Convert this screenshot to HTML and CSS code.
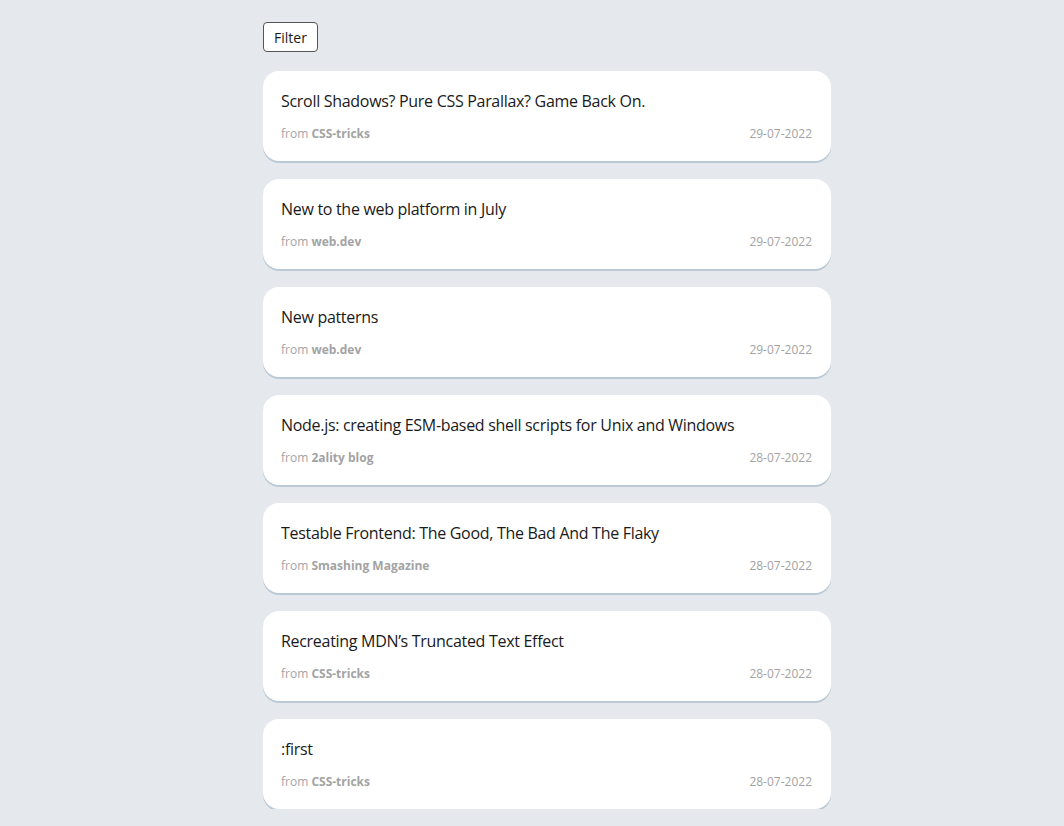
FILE: index.html
```html
<!DOCTYPE html>
<html lang="en">
<head>
<meta charset="utf-8">
<title>Feed</title>
<link rel="stylesheet" href="styles.css">
</head>
<body>
<main class="feed">
  <div class="toolbar"><button class="filter-btn">Filter</button></div>
  <ul class="list">
    <li class="card">
      <h2 class="title">Scroll Shadows? Pure CSS Parallax? Game Back On.</h2>
      <div class="meta"><span class="from">from <b>CSS-tricks</b></span><span class="date">29-07-2022</span></div>
    </li>
    <li class="card">
      <h2 class="title">New to the web platform in July</h2>
      <div class="meta"><span class="from">from <b>web.dev</b></span><span class="date">29-07-2022</span></div>
    </li>
    <li class="card">
      <h2 class="title">New patterns</h2>
      <div class="meta"><span class="from">from <b>web.dev</b></span><span class="date">29-07-2022</span></div>
    </li>
    <li class="card">
      <h2 class="title">Node.js: creating ESM-based shell scripts for Unix and Windows</h2>
      <div class="meta"><span class="from">from <b>2ality blog</b></span><span class="date">28-07-2022</span></div>
    </li>
    <li class="card">
      <h2 class="title">Testable Frontend: The Good, The Bad And The Flaky</h2>
      <div class="meta"><span class="from">from <b>Smashing Magazine</b></span><span class="date">28-07-2022</span></div>
    </li>
    <li class="card">
      <h2 class="title">Recreating MDN’s Truncated Text Effect</h2>
      <div class="meta"><span class="from">from <b>CSS-tricks</b></span><span class="date">28-07-2022</span></div>
    </li>
    <li class="card">
      <h2 class="title">:first</h2>
      <div class="meta"><span class="from">from <b>CSS-tricks</b></span><span class="date">28-07-2022</span></div>
    </li>
  </ul>
</main>
</body>
</html>
```
FILE: styles.css
```css
* { box-sizing: border-box; }
html, body { margin: 0; padding: 0; }
body {
  background: #e5e9ee;
  font-family: "Open Sans", "Noto Sans", sans-serif;
  color: #1a1a1a;
}
.feed {
  width: 568px;
  margin-left: calc(50% - 269px);
  padding-top: 22px;
}
.toolbar { display: flex; margin-bottom: 19px; }
.filter-btn {
  font-family: inherit;
  font-size: 14px;
  height: 30px;
  width: 55px;
  padding: 0;
  background: #fff;
  color: #1a1a1a;
  border: 1px solid #555;
  border-radius: 4px;
}
.list {
  list-style: none;
  margin: 0;
  padding: 0;
  display: flex;
  flex-direction: column;
  gap: 18px;
}
.card {
  background: #fff;
  border-radius: 16px;
  height: 90px;
  padding: 18px 19px 0 18px;
  box-shadow: 0 2px 0 #b9c9d5;
}
.title {
  margin: 0;
  font-size: 16px;
  font-weight: 400;
  line-height: 24px;
  letter-spacing: -0.3px;
  white-space: nowrap;
  overflow: hidden;
}
.meta {
  display: flex;
  justify-content: space-between;
  margin-top: 12px;
  font-size: 12px;
  line-height: 18px;
  color: #a3a3a3;
}
.from b { font-weight: 700; }
```
